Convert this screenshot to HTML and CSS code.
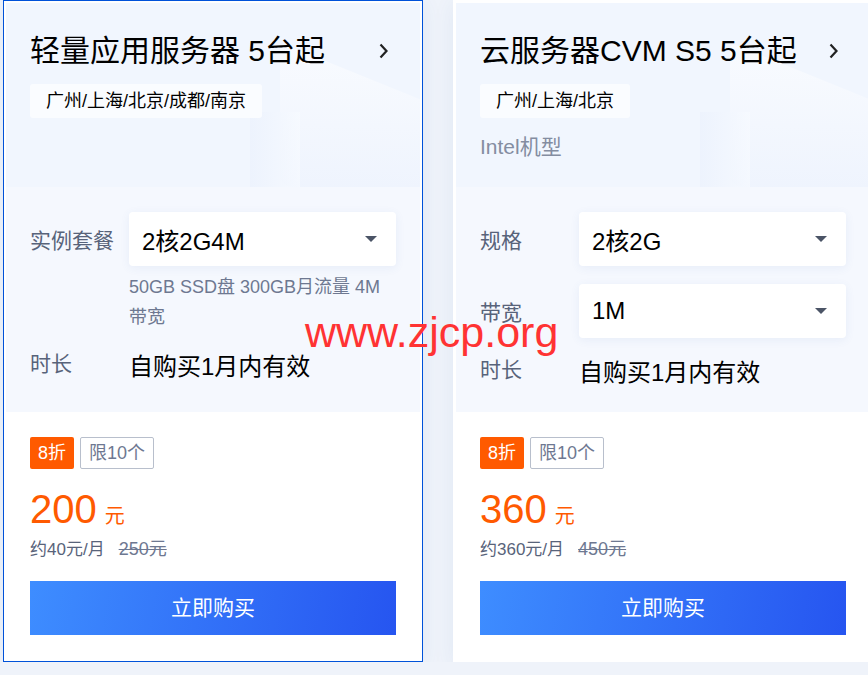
FILE: index.html
```html
<!DOCTYPE html>
<html lang="zh-CN">
<head>
    <meta charset="UTF-8">
    <meta name="viewport" content="width=device-width, initial-scale=1.0">
    <title>云产品特惠</title>
    <link rel="stylesheet" href="styles.css">
</head>
<body>
    <div class="card-list">
        <!-- 轻量应用服务器 -->
        <div class="card card-active">
            <div class="card-head">
                <div class="head-deco">
                    <span class="deco-a"></span>
                    <span class="deco-b"></span>
                </div>
                <div class="title-row">
                    <span class="title">轻量应用服务器 5台起</span>
                    <svg class="chevron" width="16" height="16" viewBox="0 0 16 16"><path d="M4.5 1.5 L10.5 8 L4.5 14.5" fill="none" stroke="#222" stroke-width="2.2"/></svg>
                </div>
                <div class="region">广州/上海/北京/成都/南京</div>
            </div>
            <div class="card-config">
                <div class="config-row">
                    <span class="label">实例套餐</span>
                    <div class="select">
                        <span>2核2G4M</span>
                        <i class="caret"></i>
                    </div>
                </div>
                <div class="config-desc">50GB SSD盘 300GB月流量 4M 带宽</div>
                <div class="config-row row-time">
                    <span class="label">时长</span>
                    <span class="value">自购买1月内有效</span>
                </div>
            </div>
            <div class="card-foot">
                <div class="tags">
                    <span class="tag tag-off">8折</span>
                    <span class="tag tag-limit">限10个</span>
                </div>
                <div class="price"><span class="num">200</span><span class="unit">元</span></div>
                <div class="price-sub">约40元/月<del>250元</del></div>
                <a class="buy" href="#">立即购买</a>
            </div>
        </div>

        <!-- 云服务器CVM -->
        <div class="card">
            <div class="card-head">
                <div class="head-deco">
                    <span class="deco-a"></span>
                    <span class="deco-b"></span>
                </div>
                <div class="title-row">
                    <span class="title">云服务器CVM S5 5台起</span>
                    <svg class="chevron" width="16" height="16" viewBox="0 0 16 16"><path d="M4.5 1.5 L10.5 8 L4.5 14.5" fill="none" stroke="#222" stroke-width="2.2"/></svg>
                </div>
                <div class="region">广州/上海/北京</div>
                <div class="model">Intel机型</div>
            </div>
            <div class="card-config">
                <div class="config-row">
                    <span class="label">规格</span>
                    <div class="select">
                        <span>2核2G</span>
                        <i class="caret"></i>
                    </div>
                </div>
                <div class="config-row row-gap">
                    <span class="label">带宽</span>
                    <div class="select">
                        <span>1M</span>
                        <i class="caret"></i>
                    </div>
                </div>
                <div class="config-row row-time">
                    <span class="label">时长</span>
                    <span class="value">自购买1月内有效</span>
                </div>
            </div>
            <div class="card-foot">
                <div class="tags">
                    <span class="tag tag-off">8折</span>
                    <span class="tag tag-limit">限10个</span>
                </div>
                <div class="price"><span class="num">360</span><span class="unit">元</span></div>
                <div class="price-sub">约360元/月<del>450元</del></div>
                <a class="buy" href="#">立即购买</a>
            </div>
        </div>
    </div>

    <div class="watermark">www.zjcp.org</div>
</body>
</html>
```

FILE: styles.css
```css
body {
    margin: 0;
    padding: 0;
    background-color: #eff3fa;
    overflow: hidden;
    font-family: "Liberation Sans", "Noto Sans CJK SC", sans-serif;
    color: #000;
}

.card-list {
    display: flex;
    gap: 30px;
    padding-left: 3px;
    width: 1000px;
}

.card {
    flex: 0 0 auto;
    width: 420px;
    height: 662px;
    box-sizing: border-box;
    padding: 2px;
    border: 1px solid #fff;
    background-color: #fff;
    box-shadow: 0 4px 20px rgba(55, 99, 170, 0.08);
    display: flex;
    flex-direction: column;
}

.card-active {
    border-color: #0052d9;
}

/* 头部 */
.card-head {
    position: relative;
    height: 184px;
    box-sizing: border-box;
    padding: 27px 24px 0;
    background-color: #f1f6fe;
    overflow: hidden;
}

.head-deco {
    position: absolute;
    right: 0;
    bottom: 0;
    width: 170px;
    height: 120px;
}

.deco-a {
    position: absolute;
    left: 30px;
    top: 10px;
    width: 170px;
    height: 140px;
    background: linear-gradient(160deg, rgba(255, 255, 255, 0.55), rgba(228, 236, 252, 0.5));
    transform: skewY(22deg);
    border-radius: 6px;
}

.deco-b {
    position: absolute;
    left: 0;
    top: 45px;
    width: 50px;
    height: 100px;
    background: linear-gradient(90deg, rgba(236, 242, 253, 0.8), rgba(248, 251, 255, 0.6));
}

.title-row {
    position: relative;
    display: flex;
    align-items: center;
    justify-content: space-between;
}

.title {
    font-size: 30px;
    line-height: 42px;
}

.chevron {
    margin-right: 4px;
}

.region {
    position: relative;
    display: inline-block;
    margin-top: 12px;
    padding: 0 16px;
    font-size: 18px;
    line-height: 34px;
    background-color: #fafcff;
    border-radius: 3px;
}

.model {
    position: relative;
    margin-top: 14px;
    font-size: 21px;
    line-height: 30px;
    color: #848da1;
}

/* 配置 */
.card-config {
    height: 225px;
    box-sizing: border-box;
    padding: 25px 24px 0;
    background-color: #f5f8fe;
}

.config-row {
    display: grid;
    grid-template-columns: 99px 1fr;
    align-items: center;
}

.row-gap {
    margin-top: 18px;
}

.row-time {
    margin-top: 18px;
}

.row-time .label {
    align-self: start;
    line-height: 28px;
}

.label {
    font-size: 21px;
    color: #58637a;
}

.select {
    display: flex;
    align-items: center;
    justify-content: space-between;
    height: 54px;
    padding: 0 19px 0 13px;
    background-color: #fff;
    border-radius: 4px;
    box-shadow: 0 2px 10px rgba(60, 100, 180, 0.08);
    font-size: 24px;
}

.caret {
    width: 0;
    height: 0;
    border-left: 6px solid transparent;
    border-right: 6px solid transparent;
    border-top: 6px solid #4b5466;
}

.config-desc {
    margin: 6px 0 0 99px;
    font-size: 18px;
    line-height: 30px;
    color: #6e7891;
}

.value {
    font-size: 24px;
    line-height: 34px;
}

/* 价格 */
.card-foot {
    flex: 1;
    padding: 25px 24px 0;
    background-color: #fff;
}

.tags {
    display: flex;
    gap: 6px;
}

.tag {
    height: 32px;
    box-sizing: border-box;
    padding: 0 8px;
    font-size: 18px;
    line-height: 32px;
    border-radius: 2px;
}

.tag-off {
    background-color: #ff5a00;
    color: #fff;
}

.tag-limit {
    border: 1px solid #b8bfcc;
    line-height: 30px;
    color: #6e7891;
}

.price {
    margin-top: 18px;
    height: 44px;
    line-height: 44px;
    color: #ff5a00;
}

.price .num {
    font-size: 40px;
}

.price .unit {
    margin-left: 8px;
    font-size: 20px;
}

.price-sub {
    margin-top: 6px;
    font-size: 17px;
    line-height: 24px;
    color: #58637a;
}

.price-sub del {
    margin-left: 14px;
    font-size: 18px;
    color: #6e7891;
}

.buy {
    display: block;
    margin-top: 19px;
    height: 54px;
    line-height: 54px;
    text-align: center;
    font-size: 21px;
    color: #fff;
    text-decoration: none;
    background: linear-gradient(100deg, #3e8dff 0%, #2655f0 100%);
}

/* 水印 */
.watermark {
    position: absolute;
    left: 305px;
    top: 311px;
    font-size: 43px;
    line-height: 43px;
    color: #ff3333;
}
```
